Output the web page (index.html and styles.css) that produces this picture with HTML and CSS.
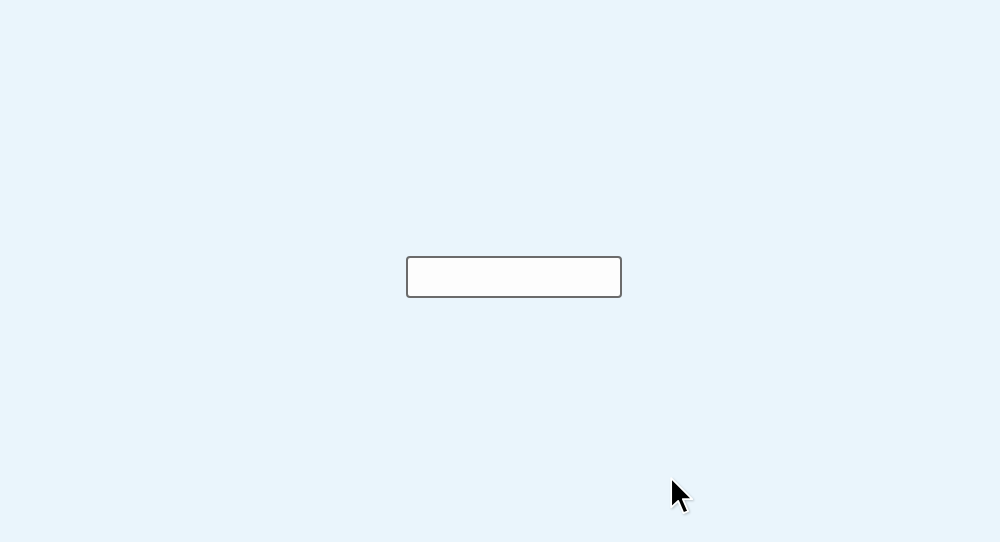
FILE: index.html
```html
<!DOCTYPE html>
<html>
<head>
<meta charset="utf-8">
<link rel="stylesheet" href="styles.css">
</head>
<body>
<main class="stage">
  <input class="field" type="text" aria-label="input">
</main>
<svg class="cursor" width="28" height="42" viewBox="0 0 24 36">
  <path d="M1 1 L1 26 L7 20.5 L11.5 31 L15.5 29.3 L11 19 L19 19 Z" fill="#000" stroke="#fff" stroke-width="1.5" stroke-linejoin="round"/>
</svg>
</body>
</html>
```
FILE: styles.css
```css
html, body {
  margin: 0;
  padding: 0;
  width: 1000px;
  height: 542px;
  overflow: hidden;
  background: #eaf5fc;
  font-family: "Liberation Sans", Arial, sans-serif;
}
.stage {
  display: flex;
  align-items: flex-start;
  padding: 256px 0 0 406px;
}
.field {
  box-sizing: border-box;
  width: 216px;
  height: 42px;
  margin: 0;
  padding: 0 10px;
  border: 2px solid #6b6b6b;
  border-radius: 4px;
  background: #fdfdfd;
  outline: none;
  font: 16px "Liberation Sans", Arial, sans-serif;
}
.cursor {
  position: absolute;
  left: 670px;
  top: 477px;
  filter: drop-shadow(1px 1px 1px rgba(0,0,0,0.2));
}
```
